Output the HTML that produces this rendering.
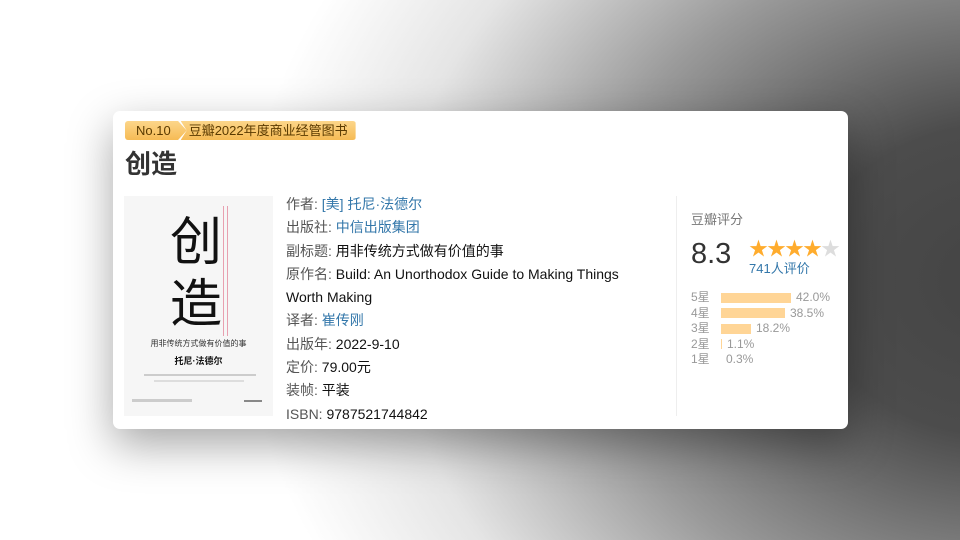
<!DOCTYPE html>
<html><head><meta charset="utf-8"><style>
*{margin:0;padding:0;box-sizing:border-box}
body{width:960px;height:540px;overflow:hidden;font-family:"Liberation Sans","Noto Sans CJK SC",sans-serif;
background:radial-gradient(ellipse 760px 620px at 1000px 280px,#444 0%,#4c4c4c 25%,rgba(100,100,100,.65) 55%,rgba(150,150,150,.25) 80%,rgba(200,200,200,0) 100%),#fff;position:relative}
.card{position:absolute;left:113px;top:111px;width:735px;height:318px;background:#fff;border-radius:7px;box-shadow:0 16px 44px rgba(0,0,0,.35)}
.badge{position:absolute;left:12px;top:10px;height:19px;display:flex;font-size:13px;line-height:19px;color:#5a3a00}
.badge .a{background:linear-gradient(#fcd68a,#f6bb55);padding:0 16px 0 11px;border-radius:3px 0 0 3px;clip-path:polygon(0 0,86% 0,100% 50%,86% 100%,0 100%)}
.badge .b{background:linear-gradient(#fcd68a,#f6bb55);padding:0 8px 0 8px;margin-left:-6px;border-radius:0 3px 3px 0;clip-path:polygon(0 0,100% 0,100% 100%,0 100%,6px 50%)}
h1{position:absolute;left:12px;top:33px;font-size:26px;color:#333;font-weight:bold}
.cover{position:absolute;left:11px;top:85px;width:149px;height:220px;background:#f6f6f6}
.info{position:absolute;left:173px;top:82px;font-size:14px;line-height:23.3px;color:#111}
.info .l{color:#555}.info a{color:#3377aa;text-decoration:none}
.sep{position:absolute;left:563px;top:85px;width:1px;height:220px;background:#eee}
.r{position:absolute;left:578px;top:98px;color:#777;font-size:13px}
.score{position:absolute;left:578px;top:127px;font-size:29px;color:#333}
.stars{position:absolute;left:636px;top:123px;font-size:19px;color:#ffac2d;letter-spacing:-1px}
.cnt{position:absolute;left:636px;top:147px;font-size:13px;color:#3377aa}
.bars{position:absolute;left:578px;top:179px;font-size:12px;color:#999;line-height:15.5px}
.bars div{display:flex;align-items:center}
.bars span.s{width:30px}
.bars i{display:inline-block;height:10px;background:#ffd596;margin-right:5px}
</style></head><body>
<div class="card">
<div class="badge"><span class="a">No.10</span><span class="b">豆瓣2022年度商业经管图书</span></div>
<h1>创造</h1>
<div class="cover">
<div style="position:absolute;left:46px;top:16px;font-size:52px;line-height:62px;color:#111">创<br>造</div>
<div style="position:absolute;left:99px;top:10px;width:5px;height:130px;border-left:1px solid #e8a0b0;border-right:1px solid #e8a0b0"></div>
<div style="position:absolute;left:0;width:149px;top:142px;text-align:center;font-size:8px;color:#333">用非传统方式做有价值的事</div>
<div style="position:absolute;left:0;width:149px;top:158px;text-align:center;font-size:9px;color:#111;font-weight:bold">托尼·法德尔</div>
<div style="position:absolute;left:20px;top:178px;width:112px;height:2px;background:#ccc"></div>
<div style="position:absolute;left:30px;top:184px;width:90px;height:2px;background:#ddd"></div>
<div style="position:absolute;left:8px;top:203px;width:60px;height:3px;background:#ccc"></div>
<div style="position:absolute;left:120px;top:204px;width:18px;height:2px;background:#888"></div>
</div>
<div class="info">
<div><span class="l">作者:</span> <a>[美] 托尼·法德尔</a></div>
<div><span class="l">出版社:</span> <a>中信出版集团</a></div>
<div><span class="l">副标题:</span> 用非传统方式做有价值的事</div>
<div><span class="l">原作名:</span> Build: An Unorthodox Guide to Making Things</div>
<div>Worth Making</div>
<div><span class="l">译者:</span> <a>崔传刚</a></div>
<div><span class="l">出版年:</span> 2022-9-10</div>
<div><span class="l">定价:</span> 79.00元</div>
<div><span class="l">装帧:</span> 平装</div>
<div><span class="l">ISBN:</span> 9787521744842</div>
</div>
<div class="sep"></div>
<div class="r">豆瓣评分</div>
<div class="score">8.3</div>
<div class="stars">★★★★<span style="color:#ddd">★</span></div>
<div class="cnt">741人评价</div>
<div class="bars">
<div><span class="s">5星</span><i style="width:70px"></i>42.0%</div>
<div><span class="s">4星</span><i style="width:64px"></i>38.5%</div>
<div><span class="s">3星</span><i style="width:30px"></i>18.2%</div>
<div><span class="s">2星</span><i style="width:1px"></i>1.1%</div>
<div><span class="s">1星</span><i style="width:0"></i>0.3%</div>
</div>
</div>
</body></html>
